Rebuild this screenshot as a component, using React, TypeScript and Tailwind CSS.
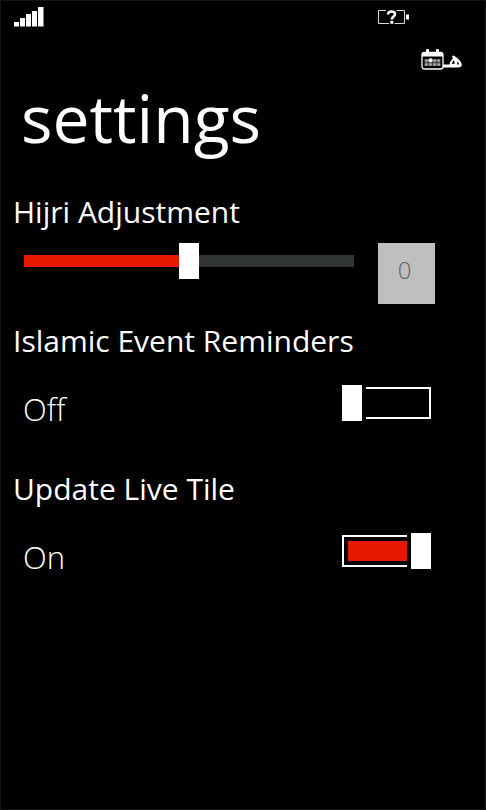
"use client";

import { useState } from "react";

type ToggleRowProps = {
  id: string;
  title: string;
  checked: boolean;
  onChange: (checked: boolean) => void;
};

function SignalIcon() {
  return (
    <svg width="30" height="20" viewBox="0 0 30 20" fill="#ffffff" aria-hidden>
      <rect x="0" y="15" width="5" height="4.5" />
      <rect x="6" y="11" width="5" height="8.5" />
      <rect x="12" y="7" width="5" height="12.5" />
      <rect x="18" y="4" width="5" height="15.5" />
      <rect x="24" y="0" width="5.5" height="19.5" />
    </svg>
  );
}

function BatteryIcon() {
  return (
    <svg width="31" height="14" viewBox="0 0 31 14" aria-hidden>
      <path
        d="M8 .5H.5v13h10.5M18.5 .5h8v13h-10"
        fill="none"
        stroke="#ffffff"
        strokeOpacity="0.85"
      />
      <rect x="28" y="4.5" width="3" height="5" fill="#ffffff" />
      <path
        d="M10 4.5C10 2.5 11.5 1.5 13.5 1.5s3.5 1 3.5 2.7c0 2.2-3.2 2.3-3.2 5.3"
        fill="none"
        stroke="#ffffff"
        strokeWidth="2.6"
      />
      <rect x="12.3" y="10.8" width="3" height="3" fill="#ffffff" />
    </svg>
  );
}

function CalendarLogo() {
  return (
    <svg width="42" height="21" viewBox="0 0 42 21" aria-hidden>
      <rect
        x="1"
        y="3.5"
        width="21"
        height="16.5"
        rx="2.5"
        fill="#000000"
        stroke="#ffffff"
        strokeWidth="1.3"
      />
      <path d="M1 7.5V5a2 2 0 0 1 2-2h17a2 2 0 0 1 2 2v2.5z" fill="#ffffff" />
      <rect x="5" y="0" width="3" height="5" rx="1" fill="#ffffff" />
      <rect x="15" y="0" width="3" height="5" rx="1" fill="#ffffff" />
      <rect x="3.5" y="10" width="16" height="7" fill="#4a4a4a" />
      <g fill="#a3a3a3">
        <circle cx="5.3" cy="11.5" r="1.5" />
        <circle cx="13.7" cy="11.5" r="1.5" />
        <circle cx="17.7" cy="11.5" r="1.5" />
        <circle cx="5.3" cy="15.5" r="1.5" />
        <circle cx="9.5" cy="15.5" r="1.5" />
        <circle cx="13.7" cy="15.5" r="1.5" />
        <circle cx="17.7" cy="15.5" r="1.5" />
      </g>
      <circle cx="9.5" cy="11.2" r="2" fill="#ffffff" />
      {/* letter heh joined to the calendar */}
      <path
        fillRule="evenodd"
        d="M22 15.5h6.5c.3-2.5 1.5-4.5 3.3-6l-.8-2.5 1.5-.5c3.5 2 8 5.5 8.300 9 .2 2-1.300 3-3.800 3H22zM31.200 15c0-1.800.6-2.700 1.600-3.400.9.8 1 2 .6 3.400zM36 12.500c1.200.8 1.900 1.600 1.900 2.400 0 .4-.7.500-1.700.500.200-1 .1-1.900-.2-2.900z"
        fill="#ffffff"
      />
    </svg>
  );
}

function ToggleRow({ id, title, checked, onChange }: ToggleRowProps) {
  return (
    <section>
      <h2 className="px-3 text-[30px] leading-10">{title}</h2>
      <div className="flex items-center justify-between pl-[22px] pr-[54px] pt-[18px] pb-[42px]">
        <label htmlFor={id} className="pt-3 text-[31px] leading-9 font-light">
          {checked ? "On" : "Off"}
        </label>
        <div
          className={`${
            checked ? "flex-row-reverse" : "flex-row"
          } relative flex items-center gap-1 w-[89px] h-9`}
        >
          <input
            id={id}
            type="checkbox"
            role="switch"
            aria-label={title}
            checked={checked}
            onChange={(e) => onChange(e.target.checked)}
            className="absolute inset-0 appearance-none cursor-pointer"
          />
          <span className="w-5 h-9 bg-white" />
          <span
            className={`${
              checked ? "border-l-2 pl-1" : "border-r-2"
            } flex-1 h-8 py-1 border-y-2 border-white`}
          >
            {checked && <span className="block h-full bg-[#e81700]" />}
          </span>
        </div>
      </div>
    </section>
  );
}

export default function App() {
  const [adjustment, setAdjustment] = useState<number>(0);
  const [reminders, setReminders] = useState<boolean>(false);
  const [liveTile, setLiveTile] = useState<boolean>(true);

  const filled = ((adjustment + 2) / 4) * 100;

  return (
    <div className="min-h-screen bg-black border border-[#141414] text-white font-['Open_Sans','Noto_Sans',sans-serif]">
      <header>
        <div className="flex items-center justify-between pl-[13px] pr-[76px] pt-1.5">
          <SignalIcon />
          <BatteryIcon />
        </div>
        <div className="flex justify-end pr-[22px] pt-[22px]">
          <CalendarLogo />
        </div>
        <h1 className="px-5 text-[66px] leading-[94px]">settings</h1>
      </header>

      <main className="pt-7">
        <section>
          <h2 className="px-3 text-[30px] leading-10">
            <label htmlFor="adjustment">Hijri Adjustment</label>
          </h2>
          <div className="flex items-start gap-6 pl-[23px] pr-[50px] pt-[11px] pb-[17px]">
            <input
              id="adjustment"
              type="range"
              min={-2}
              max={2}
              value={adjustment}
              onChange={(e) => setAdjustment(Number(e.target.value))}
              style={{
                backgroundImage: `linear-gradient(to right, #e81700 ${filled}%, #323632 ${filled}%)`,
              }}
              className="flex-1 min-w-0 h-9 appearance-none bg-[length:100%_12px] bg-center bg-no-repeat [&::-webkit-slider-thumb]:appearance-none [&::-webkit-slider-thumb]:w-5 [&::-webkit-slider-thumb]:h-9 [&::-webkit-slider-thumb]:bg-white"
            />
            <input
              type="text"
              aria-label="Days"
              value={adjustment}
              disabled
              className="w-[57px] h-[61px] pb-2 pr-1 bg-[#bfbfbf] text-center text-2xl font-light text-[#5f5f5f]"
            />
          </div>
        </section>

        <ToggleRow
          id="reminders"
          title="Islamic Event Reminders"
          checked={reminders}
          onChange={setReminders}
        />
        <ToggleRow
          id="live-tile"
          title="Update Live Tile"
          checked={liveTile}
          onChange={setLiveTile}
        />
      </main>
    </div>
  );
}
